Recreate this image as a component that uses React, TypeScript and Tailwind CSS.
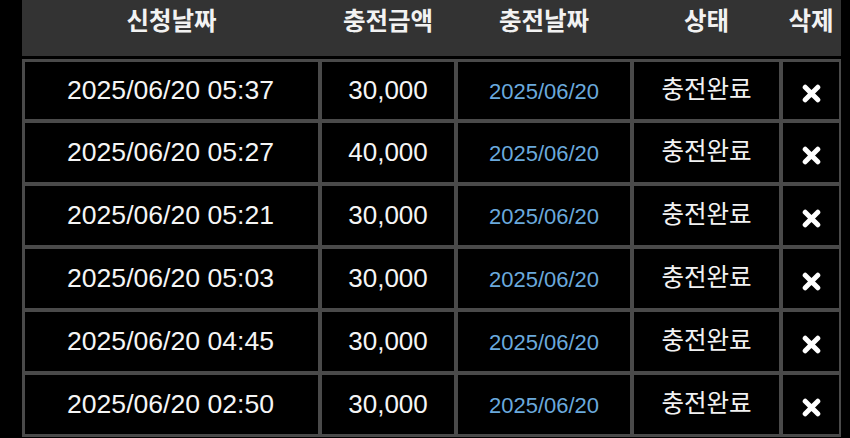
const rows = [
  { requested: "2025/06/20 05:37", amount: "30,000", charged: "2025/06/20", status: "충전완료" },
  { requested: "2025/06/20 05:27", amount: "40,000", charged: "2025/06/20", status: "충전완료" },
  { requested: "2025/06/20 05:21", amount: "30,000", charged: "2025/06/20", status: "충전완료" },
  { requested: "2025/06/20 05:03", amount: "30,000", charged: "2025/06/20", status: "충전완료" },
  { requested: "2025/06/20 04:45", amount: "30,000", charged: "2025/06/20", status: "충전완료" },
  { requested: "2025/06/20 02:50", amount: "30,000", charged: "2025/06/20", status: "충전완료" },
];

const headers = ["신청날짜", "충전금액", "충전날짜", "상태", "삭제"];

function DeleteIcon() {
  return (
    <svg width="19" height="19" viewBox="0 0 19 19" aria-hidden>
      <path d="M3.2 3.2 L15.8 15.8 M15.8 3.2 L3.2 15.8" stroke="#fff" strokeWidth="5" strokeLinecap="round" />
    </svg>
  );
}

export default function App() {
  return (
    <div className="h-[438px] w-[850px] overflow-hidden bg-black font-['Liberation_Sans','Noto_Sans_CJK_KR',sans-serif]">
      <div className="ml-[22px] grid h-[56px] w-[819px] grid-cols-[293px_132px_172px_145px_56px] gap-x-[4px] bg-[#333333] pl-[3px] pr-[2px] pt-[2px]">
        {headers.map((h) => (
          <div
            key={h}
            className="text-center font-['Noto_Sans_CJK_KR',sans-serif] text-[24.5px] font-bold leading-[36px] text-[#f2f2f2]"
          >
            {h}
          </div>
        ))}
      </div>

      <div className="ml-[22px] mt-[3px] grid w-[819px] grid-cols-[293px_132px_172px_145px_56px] grid-rows-[57px_59px_59px_59px_59px_59px] gap-[4px] bg-[#4a4a4a] pb-[3px] pl-[3px] pr-[2px] pt-[3px]">
        {rows.map((r, i) => (
          <div key={i} className="contents">
            <div className="flex items-center justify-center bg-black pr-[2px] text-[26.6px] text-[#f5f5f5]">
              {r.requested}
            </div>
            <div className="flex items-center justify-center bg-black text-[26px] text-[#f5f5f5]">
              {r.amount}
            </div>
            <div className="flex items-center justify-center bg-black pt-[2px] text-[22px] text-[#6aa9dc]">
              {r.charged}
            </div>
            <div className="flex items-center justify-center bg-black text-[24.5px] text-[#f2f2f2]">
              {r.status}
            </div>
            <div className="flex items-center justify-center bg-black pt-[6px]">
              <DeleteIcon />
            </div>
          </div>
        ))}
      </div>
    </div>
  );
}
